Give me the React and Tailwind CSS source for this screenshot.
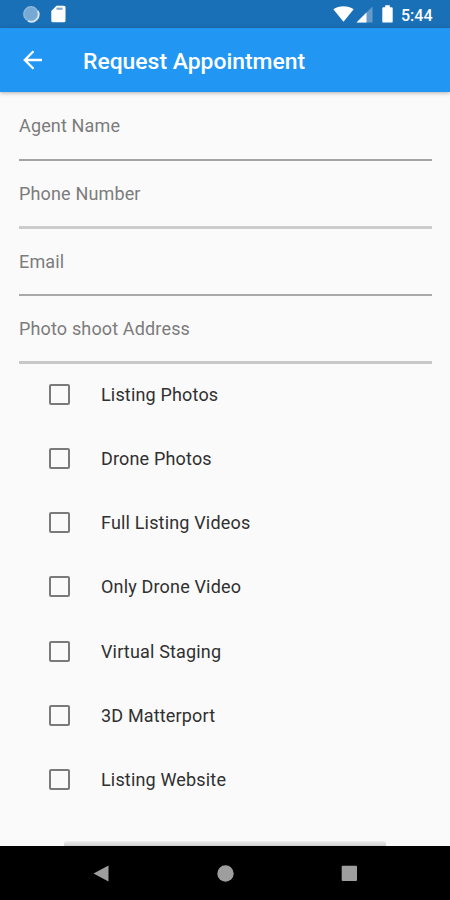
import React from 'react';

const fields = [
  { label: 'Agent Name', row: 'h-17', line: 'h-[2px] bg-[#a3a3a3]' },
  { label: 'Phone Number', row: 'h-17', line: 'h-[3px] bg-[#cccccc]' },
  { label: 'Email', row: 'h-[67px]', line: 'h-[2px] bg-[#a9a9a9]' },
  { label: 'Photo shoot Address', row: 'h-17', line: 'h-[3px] bg-[#c8c8c8]' }
];

const services = [
  'Listing Photos',
  'Drone Photos',
  'Full Listing Videos',
  'Only Drone Video',
  'Virtual Staging',
  '3D Matterport',
  'Listing Website'
];

const StatusBar = () => (
  <div className="flex h-7 shrink-0 items-center bg-[#1a70b7] pl-[21.5px] pr-[17px] text-white">
    <svg width="18" height="18" viewBox="0 0 18 18">
      <circle cx="9" cy="9" r="7.2" fill="#76a9d4" stroke="#8cb7db" strokeWidth="1.5" />
      <path d="M15.8 6A7.3 7.3 0 0 1 6 15.9" fill="none" stroke="#d3e4f2" strokeWidth="1.8" />
    </svg>
    <svg className="ml-[11.5px]" width="15" height="18" viewBox="0 0 15 18">
      <path d="M5.5.8H13a1.5 1.5 0 0 1 1.5 1.5v13.4a1.5 1.5 0 0 1-1.5 1.5H1.8a1.5 1.5 0 0 1-1.5-1.5V6z" fill="currentColor" />
      <path d="M5.5 2.6h6v2.2h-6z" fill="#7fa9cd" />
    </svg>
    <svg className="ml-auto" width="21" height="16" viewBox="0 0 21 16">
      <path d="M.3 3.3C6-.8 15-.8 20.7 3.3L10.5 15.8z" fill="currentColor" />
    </svg>
    <svg className="ml-[2px]" width="17" height="17" viewBox="0 0 17 17">
      <path d="M16.5.5v16H.5z" fill="#659bcb" />
      <path d="M10.5 6.5v10H.5z" fill="currentColor" />
    </svg>
    <svg className="ml-[9px]" width="11" height="18" viewBox="0 0 11 18">
      <path d="M3.2.3h4.6v1.9h1.7A1.2 1.2 0 0 1 10.7 3.4v13a1.2 1.2 0 0 1-1.2 1.2h-8A1.2 1.2 0 0 1 .3 16.4v-13a1.2 1.2 0 0 1 1.2-1.2h1.7z" fill="currentColor" />
    </svg>
    <span className="ml-[8px] mt-[3px] w-8 whitespace-nowrap text-[16px] font-medium leading-none">5:44</span>
  </div>
);

const AppBar = () => (
  <header className="relative z-10 flex h-16 shrink-0 items-center bg-[#2196f3] pl-[23px] text-white shadow-[0_1px_4px_rgba(0,0,0,0.3)]">
    <svg width="20" height="20" viewBox="0 0 20 20" fill="none" stroke="currentColor" strokeWidth="2.3">
      <path d="M19 10H2M10.5 1.3 1.8 10l8.7 8.7" />
    </svg>
    <h1 className="ml-[40px] mt-[3px] whitespace-nowrap text-[22.9px] font-medium leading-[23px]">Request Appointment</h1>
  </header>
);

const Field = ({ label, row, line }) => (
  <div className={`flex flex-col ${row}`}>
    <label className="mt-[21px] text-[18px] leading-6 tracking-[0.15px] text-[#7c7c7c]">{label}</label>
    <div className={`mt-auto ${line}`} />
  </div>
);

const ServiceOption = ({ label }) => (
  <div className="flex h-[64.2px] items-center pl-[49.4px]">
    <span className="size-[21px] shrink-0 rounded-[2px] border-2 border-[#7a7a7a]" />
    <span className="ml-[30.6px] text-[18px] tracking-[0.17px] text-[#303030]">{label}</span>
  </div>
);

const NavigationBar = () => (
  <nav className="relative z-10 flex h-[54px] shrink-0 items-center bg-black pl-[93px] text-[#9e9e9e]">
    <svg width="16" height="17" viewBox="0 0 16 17" fill="currentColor">
      <path d="M15.5.5v16L.5 8.5z" />
    </svg>
    <svg className="ml-[108px]" width="17" height="17" viewBox="0 0 17 17" fill="currentColor">
      <circle cx="8.5" cy="8.5" r="8.2" />
    </svg>
    <svg className="ml-[107px]" width="17" height="17" viewBox="0 0 17 17" fill="currentColor">
      <rect x="0.7" y="0.7" width="15.3" height="15.3" rx="1" />
    </svg>
  </nav>
);

const App = () => (
  <div className="flex h-[900px] w-[450px] flex-col overflow-hidden bg-[#fafafa] font-['Roboto',sans-serif]">
    <StatusBar />
    <AppBar />
    <main className="flex min-h-0 flex-1 flex-col overflow-hidden">
      <div className="pl-[19px] pr-[18px] pt-px">
        {fields.map((field) => (
          <Field key={field.label} {...field} />
        ))}
      </div>
      <div className="-mt-[1.8px]">
        {services.map((service) => (
          <ServiceOption key={service} label={service} />
        ))}
      </div>
      {/* Top edge of the submit button, cut off by the navigation bar */}
      <div className="mx-auto mt-auto h-[5px] w-[322px] shrink-0 rounded-t-[3px] bg-linear-to-b from-[#eeeeee] to-[#cfcfcf]" />
    </main>
    <NavigationBar />
  </div>
);

export default App;
